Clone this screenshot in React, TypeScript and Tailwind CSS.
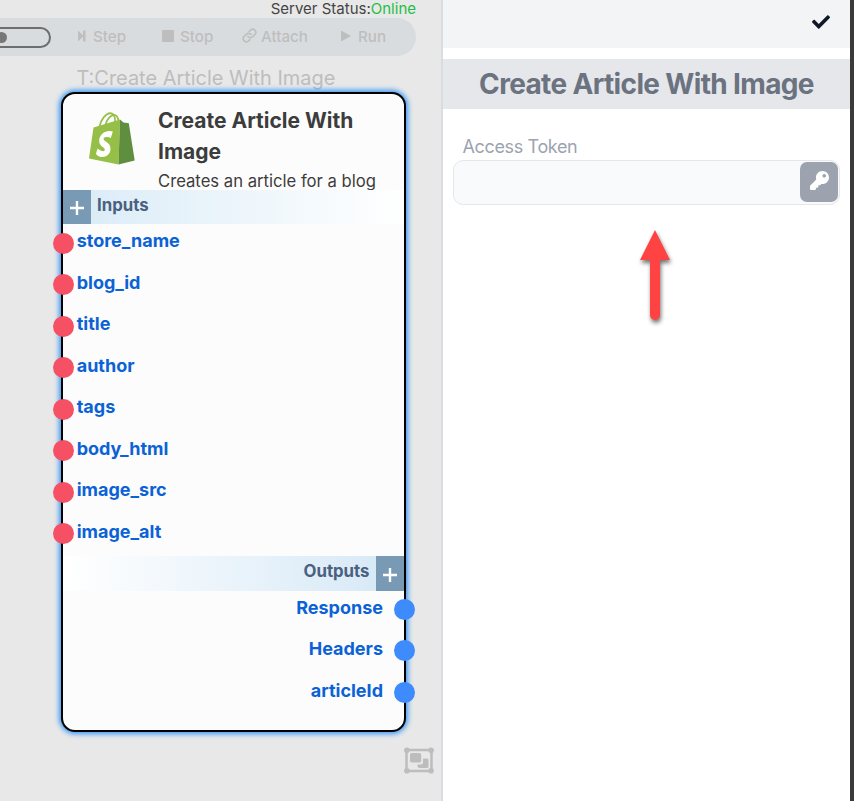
import { FaCheck, FaKey } from "react-icons/fa";

const inputs = ["store_name", "blog_id", "title", "author", "tags", "body_html", "image_src", "image_alt"];
const outputs = ["Response", "Headers", "articleId"];

function Plus() {
  return (
    <svg width="14" height="14" viewBox="0 0 14 14" className="block">
      <path d="M7 0v14M0 7h14" stroke="#fff" strokeWidth="2.4" />
    </svg>
  );
}

function ShopifyBag() {
  return (
    <svg width="46" height="53" viewBox="0 0 46 53" className="block">
      <path d="M10.500 14.500C12 7 17 1.500 21.500 1.200c3.500 0 4.800 4 4.800 10M16.500 12.500C18 7 22 3 25 2.800c3 0 4 3 4.500 6" fill="none" stroke="#95bf47" strokeWidth="1.700" />
      <path d="M4.500 15.500 31 7.500 29.500 52.500 0 46.500Z" fill="#95bf47" />
      <path d="M31 7.500 34.500 10.500 39.800 11.300 45.700 48.600 29.500 52.500Z" fill="#5e8e3e" />
      <path d="M23.800 19.500 21.800 26c-4.500-2-7.400-.8-7.200 1 .3 2.600 6.900 3.500 6.900 9.500 0 5.500-3.800 8.500-8.200 8.500-3.500 0-6-2-6.300-3.500l1.600-5c4 3.300 7.200 3.300 7.200 1.200 0-2.500-5.600-3.300-5.600-8.700 0-7.300 7.200-11.600 13.600-9.500Z" fill="#fff" />
    </svg>
  );
}

function GroupIcon() {
  return (
    <svg width="30" height="27" viewBox="0 0 30 27" className="absolute left-[404px] top-[747px]" fill="#bdbdbd">
      <rect x="2.500" y="3" width="25" height="21" fill="none" stroke="#bdbdbd" strokeWidth="2.500" />
      <circle cx="2.900" cy="3.200" r="2.800" />
      <circle cx="27.100" cy="3.200" r="2.800" />
      <circle cx="2.900" cy="23.800" r="2.800" />
      <circle cx="27.100" cy="23.800" r="2.800" />
      <rect x="6" y="6" width="11.200" height="9.500" rx="1.800" />
      <path d="M19 11.500h4a1.500 1.500 0 0 1 1.500 1.500v6.500a1.500 1.500 0 0 1-1.500 1.500h-7.500a2 2 0 0 1-2-2v-1.500h3.500a2 2 0 0 0 2-2Z" />
    </svg>
  );
}

function Toolbar() {
  return (
    <div className="flex h-[38px] w-[416px] items-center rounded-r-[20px] bg-[#d9dcde] text-[15.200px] font-medium text-[#bebebe]">
      <div className="-ml-[14px] flex h-[21px] w-[65px] items-center rounded-full border-2 border-[#6e6e6e] pl-[8px]">
        <div className="size-[11px] rounded-full bg-[#777]" />
      </div>
      <div className="ml-[27px] flex w-[84px] items-center">
        <svg width="8" height="12" viewBox="0 0 8 12" className="mb-[2px]"><path d="M0 0.500 5.500 6 0 11.500ZM5 0.500h2.500v11H5Z" fill="currentColor" /></svg>
        <span className="ml-[7px]">Step</span>
      </div>
      <div className="flex w-[80px] items-center">
        <div className="mb-[2px] size-[12px] bg-[#bebebe]" />
        <span className="ml-[6px]">Stop</span>
      </div>
      <div className="flex w-[99px] items-center">
        <svg width="15" height="15" viewBox="0 0 24 24" className="mb-[2px]" fill="none" stroke="currentColor" strokeWidth="2.600" strokeLinecap="round" strokeLinejoin="round">
          <path d="M9.500 13.500a5 5 0 0 0 7.500.5l4-4a5 5 0 0 0-7-7l-2.500 2.500" />
          <path d="M14.500 10.500A5 5 0 0 0 7 10l-4 4a5 5 0 0 0 7 7l2.500-2.500" />
        </svg>
        <span className="ml-[4px]">Attach</span>
      </div>
      <div className="flex items-center">
        <svg width="10" height="12" viewBox="0 0 10 12" className="mb-[2px]"><path d="M0 0.500 10 6 0 11.500Z" fill="currentColor" /></svg>
        <span className="ml-[7px]">Run</span>
      </div>
    </div>
  );
}

function NodeCard() {
  return (
    <div className="absolute left-[61px] top-[91.500px] flex h-[640px] w-[345px] flex-col rounded-[14px] border-2 border-black bg-[#fcfcfc] shadow-[0_0_5px_2px_#3b98f5]">
      <div className="flex h-[96.500px] shrink-0 overflow-hidden">
        <div className="ml-[26px] mt-[18px] w-[46px] shrink-0"><ShopifyBag /></div>
        <div className="ml-[23px] mt-[11px] whitespace-nowrap text-[#3c3c3c]">
          <div className="text-[21px] font-bold leading-[31px]">Create Article With<br />Image</div>
          <div className="text-[16.650px] leading-[28px]">Creates an article for a blog</div>
        </div>
      </div>
      <div className="flex h-[34px] shrink-0 bg-linear-to-r from-[#d9ebf7] to-white">
        <div className="flex w-[28px] items-center justify-center bg-[#789ab5] pt-[2px]"><Plus /></div>
        <span className="ml-[6px] text-[16.800px] font-bold leading-[31px] text-[#4a6180]">Inputs</span>
      </div>
      {inputs.map((name) => (
        <div key={name} className="-ml-[10px] flex h-[41.500px] shrink-0 items-start">
          <div className="mt-[8.900px] size-[21px] shrink-0 rounded-full bg-[#f55064]" />
          <span className="ml-[2.700px] text-[18px] font-bold leading-[34px] text-[#0b62d6]">{name}</span>
        </div>
      ))}
      <div className="flex h-[35px] shrink-0 justify-end bg-linear-to-l from-[#d5e8f6] to-white">
        <span className="mr-[6.500px] text-[16.800px] font-bold leading-[31px] text-[#4a6180]">Outputs</span>
        <div className="flex w-[28px] items-center justify-center bg-[#789ab5] pt-[3px]"><Plus /></div>
      </div>
      {outputs.map((name) => (
        <div key={name} className="-mr-[10.500px] flex h-[41.450px] shrink-0 items-start justify-end">
          <span className="mr-[10.500px] text-[18px] font-bold leading-[34px] text-[#0b62d6]">{name}</span>
          <div className="mt-[8px] size-[21px] shrink-0 rounded-full bg-[#3d8bfd]" />
        </div>
      ))}
    </div>
  );
}

export default function App() {
  return (
    <div className="flex h-[801px] w-[854px] overflow-hidden bg-white font-['Inter',sans-serif]">
      <div className="relative w-[441px] shrink-0 overflow-hidden bg-[#e8e8e8]">
        <div className="h-[18px] pr-[25px] text-right text-[15px] leading-[17px] text-[#444]">
          Server Status:<span className="text-[#1fbf46]">Online</span>
        </div>
        <Toolbar />
        <div className="ml-[76.500px] mt-[8px] whitespace-nowrap text-[19.950px] leading-[28px] text-[#bdbdbd]">T:Create Article With Image</div>
        <NodeCard />
        <GroupIcon />
      </div>
      <div className="w-[2px] shrink-0 bg-[#d9dde1]" />
      <div className="flex w-[407px] shrink-0 flex-col">
        <div className="flex h-[48px] items-center justify-end bg-[#f3f4f6] pb-[4px] pr-[20px]">
          <FaCheck size={18} color="#111827" />
        </div>
        <div className="mt-[11px] h-[50px] whitespace-nowrap bg-[#e5e7eb] text-center text-[28px] font-bold leading-[50px] tracking-[-0.65px] text-[#6b7280]">Create Article With Image</div>
        <div className="ml-[19.500px] mt-[24px] h-[27px] text-[18px] leading-[27px] tracking-[-0.36px] text-[#9ca3af]">Access Token</div>
        <div className="ml-[10px] flex h-[45px] w-[387px] justify-end rounded-[10px] border border-[#e5e7eb] bg-[#f9fafb] pr-px pt-px">
          <div className="flex h-[40px] w-[38px] items-center justify-center rounded-[7px] bg-[#9ca3af] pb-[3px]">
            <FaKey size={19} color="#fff" />
          </div>
        </div>
        <svg width="60" height="110" viewBox="0 0 60 110" className="ml-[182px] mt-[15px] drop-shadow-[1px_3px_2px_rgba(0,0,0,0.55)]">
          <path d="M30 10 45 40H35V95a5 5 0 0 1-10 0V40H15Z" fill="#ff4343" />
        </svg>
      </div>
      <div className="w-[4px] shrink-0 bg-[#3a3a3a]" />
    </div>
  );
}
